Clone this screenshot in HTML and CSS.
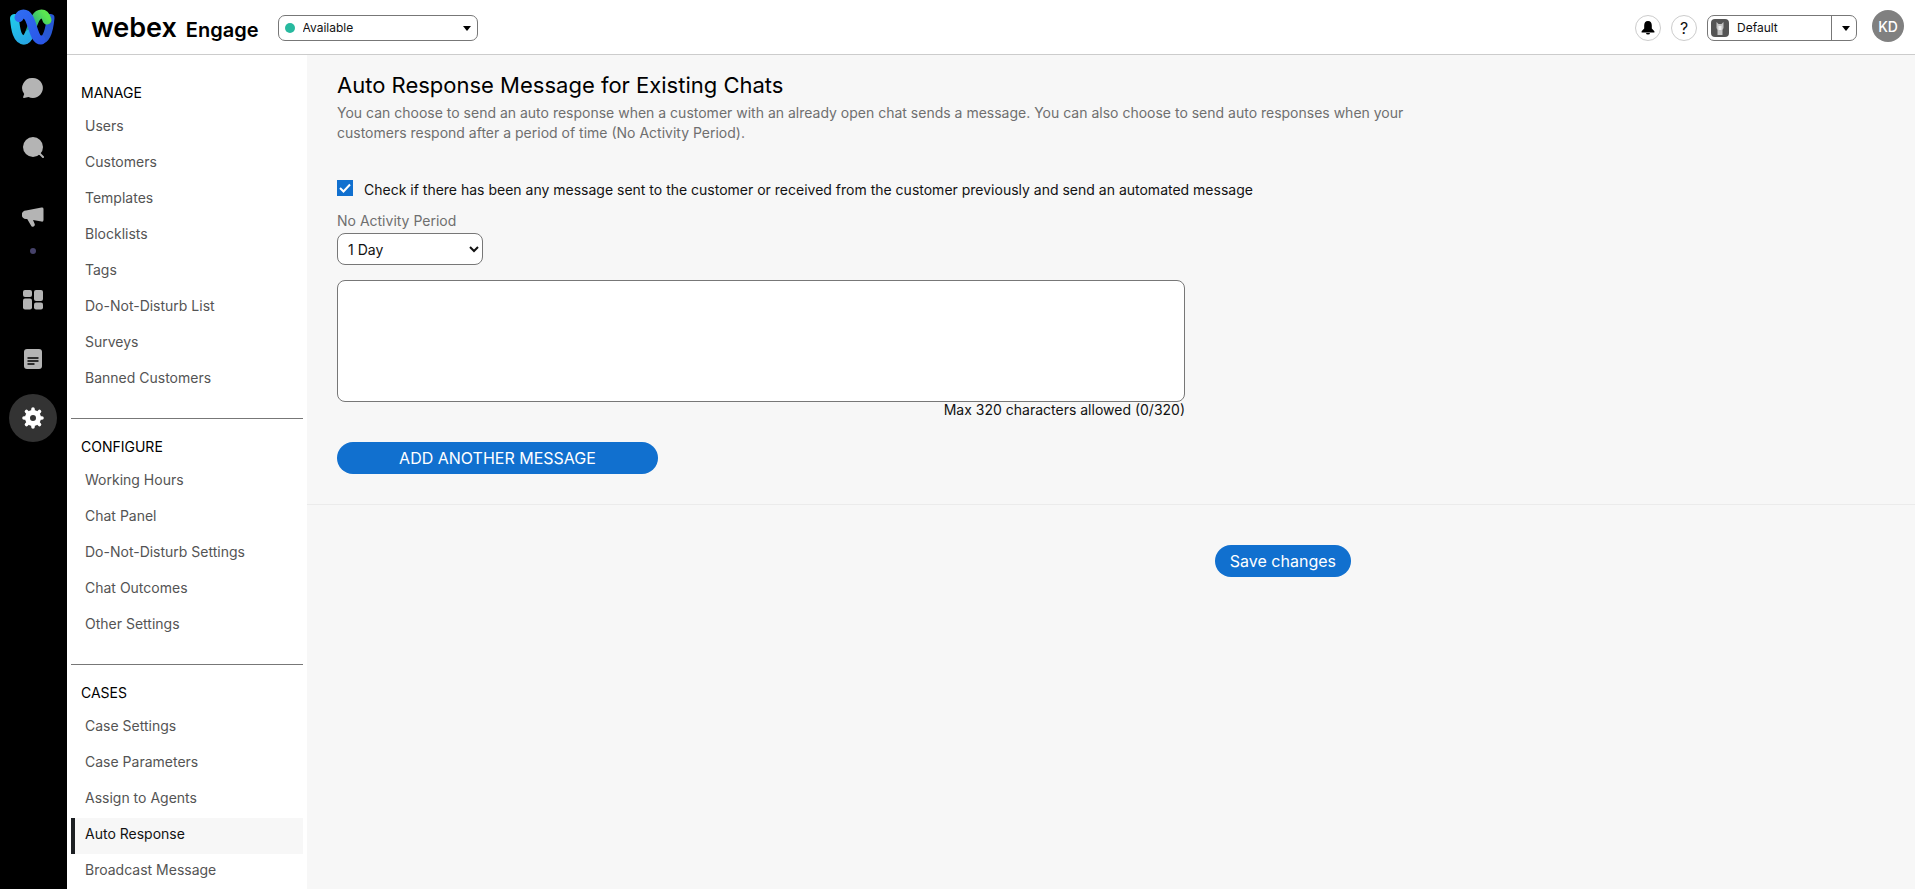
FILE: index.html
```html
<!DOCTYPE html>
<html lang="en">
<head>
  <meta charset="UTF-8">
  <meta name="viewport" content="width=device-width, initial-scale=1.0">
  <title>Webex Engage - Auto Response</title>
  <link rel="stylesheet" href="styles.css">
</head>
<body>
  <nav class="rail" aria-label="Main">
    <a class="rail-logo" href="#" aria-label="Webex">
      <svg width="46" height="36" viewBox="0 0 46 36" fill="none" stroke-linecap="round" stroke-linejoin="round">
        <defs>
          <linearGradient id="cyan" x1="4" y1="6" x2="20" y2="32" gradientUnits="userSpaceOnUse">
            <stop offset="0" stop-color="#20cdea"/><stop offset="1" stop-color="#27a6e4"/>
          </linearGradient>
          <linearGradient id="blue" x1="10" y1="4" x2="40" y2="30" gradientUnits="userSpaceOnUse">
            <stop offset="0" stop-color="#2f6bf2"/><stop offset="1" stop-color="#2a55e6"/>
          </linearGradient>
          <linearGradient id="green" x1="22" y1="20" x2="38" y2="8" gradientUnits="userSpaceOnUse">
            <stop offset="0" stop-color="#1c9f90"/><stop offset="1" stop-color="#5be650"/>
          </linearGradient>
        </defs>
        <path d="M41.500 9C40.500 20 38 31 32 31" stroke="#2858d4" stroke-width="8"/>
        <path d="M14 31C23 31 22.500 5 32.500 5C35.500 5 37 7.500 38 11" stroke="url(#green)" stroke-width="9"/>
        <path d="M5.500 9.500C6.500 21 8.500 31 15 31C17.500 31 19.500 28 20.500 25" stroke="url(#cyan)" stroke-width="9"/>
        <path d="M10 8.500C11 6 12 5 14.500 5C24 5 23 31 32 31" stroke="url(#blue)" stroke-width="9"/>
      </svg>
    </a>
    <a class="rail-item" href="#" aria-label="Chats">
      <svg width="22" height="22" viewBox="0 0 22 22"><path fill="currentColor" d="M11 1a10 10 0 1 1-4.500 19L2 21q-1.500 0-.7-1.500l.9-2.500A10 10 0 0 1 11 1z"/></svg>
    </a>
    <a class="rail-item" href="#" aria-label="Search">
      <svg width="22" height="22" viewBox="0 0 22 22"><circle cx="11" cy="11" r="10" fill="currentColor"/><path d="M17.500 17.500l3.500 3.500" stroke="currentColor" stroke-width="2" stroke-linecap="round"/></svg>
    </a>
    <a class="rail-item rail-item-tall" href="#" aria-label="Campaigns">
      <svg width="22" height="22" viewBox="0 0 22 22"><path fill="currentColor" d="M4 4.500L19.500 1.600Q21.500 1.300 21.500 3V14Q21.500 16 19.500 15.600L11 14l1.600 3.800a1.900 1.900 0 0 1-3.600 1.600L5.200 13H4A4.200 4.200 0 0 1 4 4.500z"/></svg>
      <span class="rail-dot"></span>
    </a>
    <a class="rail-item" href="#" aria-label="Dashboard">
      <svg width="22" height="22" viewBox="0 0 22 22" fill="currentColor"><rect x="1" y="1" width="9" height="7" rx="2"/><rect x="12" y="1" width="9" height="11" rx="2"/><rect x="1" y="9.500" width="9" height="11" rx="2"/><rect x="12" y="13.500" width="9" height="7" rx="2"/></svg>
    </a>
    <a class="rail-item" href="#" aria-label="Reports">
      <svg width="22" height="22" viewBox="0 0 22 22"><rect x="2" y="1" width="18" height="20" rx="3" fill="currentColor"/><path d="M6 10h10M6 13h10M6 16h6" stroke="#000" stroke-width="1.400" stroke-linecap="round"/></svg>
    </a>
    <a class="rail-item active" href="#" aria-label="Settings">
      <svg width="22" height="22" viewBox="0 0 22 22" fill="none" stroke="currentColor"><circle cx="11" cy="11" r="5.500" stroke-width="5"/><path d="M11 2V5M11 17v3M2 11H5M17 11h3M4.500 4.500l2.200 2.200M15.300 15.300l2.200 2.200M4.500 17.500l2.200-2.200M15.300 6.700l2.200-2.200" stroke-width="3.600" stroke-linecap="round"/></svg>
    </a>
  </nav>

  <div class="page">
    <header class="topbar">
      <a class="brand" href="#"><span class="brand-name">webex</span> <span class="brand-product">Engage</span></a>
      <div class="status">
        <span class="status-dot"></span>
        <select class="status-select" aria-label="Status">
          <option>Available</option>
        </select>
        <svg class="caret" width="8" height="5" viewBox="0 0 8 5"><path d="M0 0h8L4 5z"/></svg>
      </div>
      <div class="topbar-right">
        <button class="icon-button" type="button" aria-label="Notifications">
          <svg width="14" height="16" viewBox="0 0 14 16"><path d="M7 1C4.300 1 3.200 3 3.200 5.500V8.500L.6 11.200V12.500H13.400V11.200L10.800 8.500V5.500C10.800 3 9.700 1 7 1zM5 13h4a2 1.600 0 0 1-4 0z"/></svg>
        </button>
        <button class="icon-button help" type="button" aria-label="Help">?</button>
        <div class="team">
          <svg class="team-icon" width="18" height="18" viewBox="0 0 18 18"><rect width="18" height="18" rx="4" fill="#555"/><path d="M5.500 3l2 2h3l2-2v6l-1 2v5h-5v-5l-1-2z" fill="#c4c4c4"/><path d="M7.500 7h3v4h-3z" fill="#eee"/></svg>
          <select class="team-select" aria-label="Team">
            <option>Default</option>
          </select>
          <svg class="caret" width="8" height="5" viewBox="0 0 8 5"><path d="M0 0h8L4 5z"/></svg>
        </div>
        <button class="avatar" type="button">KD</button>
      </div>
    </header>

    <div class="body">
      <nav class="sidebar" aria-label="Settings">
        <section class="menu">
          <h2>MANAGE</h2>
          <ul>
            <li><a href="#">Users</a></li>
            <li><a href="#">Customers</a></li>
            <li><a href="#">Templates</a></li>
            <li><a href="#">Blocklists</a></li>
            <li><a href="#">Tags</a></li>
            <li><a href="#">Do-Not-Disturb List</a></li>
            <li><a href="#">Surveys</a></li>
            <li><a href="#">Banned Customers</a></li>
          </ul>
        </section>
        <section class="menu">
          <h2>CONFIGURE</h2>
          <ul>
            <li><a href="#">Working Hours</a></li>
            <li><a href="#">Chat Panel</a></li>
            <li><a href="#">Do-Not-Disturb Settings</a></li>
            <li><a href="#">Chat Outcomes</a></li>
            <li><a href="#">Other Settings</a></li>
          </ul>
        </section>
        <section class="menu">
          <h2>CASES</h2>
          <ul>
            <li><a href="#">Case Settings</a></li>
            <li><a href="#">Case Parameters</a></li>
            <li><a href="#">Assign to Agents</a></li>
            <li><a class="active" href="#">Auto Response</a></li>
            <li><a href="#">Broadcast Message</a></li>
          </ul>
        </section>
      </nav>

      <main class="content">
        <form>
          <div class="panel">
            <h1>Auto Response Message for Existing Chats</h1>
            <p class="intro">You can choose to send an auto response when a customer with an already open chat sends a message. You can also choose to send auto responses when your customers respond after a period of time (No Activity Period).</p>
            <div class="check-row">
              <span class="check">
                <input type="checkbox" id="checkPrevious" checked>
                <svg width="16" height="16" viewBox="0 0 16 16" fill="none" stroke="#fff" stroke-width="2"><path d="M3 8l3.500 3.500L13 4.500"/></svg>
              </span>
              <label for="checkPrevious">Check if there has been any message sent to the customer or received from the customer previously and send an automated message</label>
            </div>
            <label class="field-label" for="period">No Activity Period</label>
            <select class="period" id="period">
              <option>1 Day</option>
            </select>
            <div class="message">
              <textarea id="message" maxlength="320" aria-label="Message"></textarea>
              <span class="counter">Max 320 characters allowed (0/320)</span>
            </div>
            <button class="btn btn-wide" type="button">ADD ANOTHER MESSAGE</button>
          </div>
          <div class="actions">
            <button class="btn" type="submit">Save changes</button>
          </div>
        </form>
      </main>
    </div>
  </div>
</body>
</html>
```

FILE: styles.css
```css
* { box-sizing: border-box; }
body {
  margin: 0; height: 100vh; display: flex; overflow: hidden;
  font-family: Inter, "Liberation Sans", sans-serif; font-size: 14px; line-height: 20px; color: #121212;
}
a { color: inherit; text-decoration: none; }
button, select, textarea { font-family: inherit; color: inherit; }
svg { display: block; }

/* icon rail */
.rail { width: 67px; flex: none; padding-right: 1px; background: #000; color: #b4b4b4; }
.rail-logo { display: flex; height: 58px; padding: 9px 0 0 9px; }
.rail-item { display: flex; flex-direction: column; align-items: center; justify-content: center; height: 59px; }
.rail-item-tall { height: 94px; gap: 20px; padding-top: 14px; }
.rail-dot { width: 6px; height: 6px; border-radius: 50%; background: #46426a; }
.rail-item.active { width: 48px; height: 48px; margin: 6px auto; border-radius: 50%; background: #333; color: #fff; }

.page { flex: 1; min-width: 0; display: flex; flex-direction: column; }

/* top bar */
.topbar {
  display: flex; align-items: center; height: 55px; flex: none; padding: 2px 11px 0 24px;
  background: #fff; border-bottom: 1px solid #ccc;
}
.brand { display: flex; align-items: baseline; gap: 9px; padding-top: 2px; color: #000; font-weight: 600; }
.brand-name { font-size: 27px; }
.brand-product { font-size: 20px; }
.status, .team {
  position: relative; display: flex; align-items: center; height: 26px;
  border: 1px solid #777; border-radius: 7px; background: #fff;
}
.status { width: 200px; margin-left: 19px; }
.status-dot { position: absolute; left: 6px; width: 10px; height: 10px; border-radius: 50%; background: #27b99f; pointer-events: none; }
.status-select, .team-select {
  appearance: none; width: 100%; height: 100%; border: 0; background: none;
  padding: 0 24px 2px 24px; font-size: 12px;
}
.caret { position: absolute; right: 6px; pointer-events: none; }
.topbar-right { display: flex; align-items: center; gap: 10px; margin-left: auto; }
.icon-button {
  width: 26px; height: 26px; padding: 0; display: flex; align-items: center; justify-content: center;
  border: 1px solid #ccc; border-radius: 50%; background: #fff;
}
.help { font-size: 16px; }
.team { width: 150px; }
.team-icon { position: absolute; left: 3px; pointer-events: none; }
.team-select { padding-left: 29px; background: linear-gradient(#777, #777) no-repeat right 24px top / 1px 100%; }
.avatar {
  width: 32px; height: 32px; padding: 0; margin: 0 0 4px 5px; border: 0; border-radius: 50%;
  background: #808080; color: #fff; font-size: 14px; font-weight: 500;
}

.body { flex: 1; min-height: 0; display: flex; }

/* settings menu */
.sidebar { width: 240px; flex: none; padding: 10px 4px 0; background: #fff; overflow: hidden; }
.menu { padding-bottom: 20px; }
.menu + .menu { border-top: 1px solid #777; }
.menu h2 { margin: 0; padding: 18px 10px 7px; font-size: 14px; line-height: 20px; font-weight: 400; color: #000; }
.menu ul { list-style: none; margin: 0; padding: 0; }
.menu a { display: block; height: 36px; padding: 6px 10px; border-left: 4px solid transparent; color: #545454; }
.menu a.active { border-left-color: #1c1f22; background: #f7f7f7; color: #121212; }

/* content */
.content { flex: 1; min-width: 0; background: #f7f7f7; overflow: hidden; }
.panel { padding: 14px 30px 30px; border-bottom: 1px solid #ebebeb; }
h1 { margin: 0; font-size: 22px; line-height: 32px; font-weight: 400; color: #000; }
.intro { max-width: 1080px; margin: 2px 0 37px; color: #6f6f6f; }
.check-row { display: flex; align-items: flex-start; gap: 11px; margin-bottom: 11px; }
.check { position: relative; width: 16px; height: 16px; flex: none; }
.check input { appearance: none; display: block; width: 16px; height: 16px; margin: 0; border: 1px solid #777; background: #fff; }
.check input:checked { border-color: #1170cf; background: #1170cf; }
.check svg { position: absolute; inset: 0; pointer-events: none; }
.field-label { display: block; margin-bottom: 2px; color: #6f6f6f; }
.period {
  display: block; width: 146px; height: 32px; padding: 0 4px 0 6px;
  border: 1px solid #777; border-radius: 8px; background: #fff; font-size: 14px;
}
.message { max-width: 848px; margin: 15px 0 24px; }
.message textarea {
  display: block; width: 100%; height: 122px; padding: 8px; resize: none;
  border: 1px solid #777; border-radius: 8px; background: #fff; font-size: 14px;
}
.counter { display: block; text-align: right; line-height: 16px; }
.btn {
  height: 32px; padding: 0 15px; border: 0; border-radius: 16px;
  background: #1170cf; color: #fff; font-size: 16px; font-weight: 400;
}
.btn-wide { display: block; width: 321px; }
.actions { display: flex; justify-content: flex-end; max-width: 1044px; padding: 40px 0 0; }
```
